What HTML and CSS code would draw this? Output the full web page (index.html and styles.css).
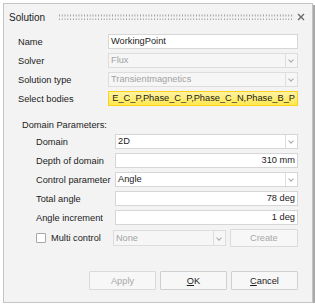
FILE: index.html
```html
<!DOCTYPE html>
<html lang="en">
<head>
    <meta charset="UTF-8">
    <title>Solution</title>
    <link rel="stylesheet" href="styles.css">
</head>
<body>
    <div class="window">
        <div class="titlebar">
            <span class="title">Solution</span>
            <span class="grip"></span>
            <svg class="close" width="8" height="8" viewBox="0 0 8 8">
                <path d="M1 1 L7 7 M7 1 L1 7" stroke="#6a6a6a" stroke-width="1.4" fill="none"/>
            </svg>
        </div>

        <div class="form">
            <div class="grid top">
                <label>Name</label>
                <div class="field">WorkingPoint</div>

                <label>Solver</label>
                <div class="field combo disabled"><span class="val">Flux</span><span class="arrow"></span></div>

                <label>Solution type</label>
                <div class="field combo disabled"><span class="val">Transientmagnetics</span><span class="arrow"></span></div>

                <label>Select bodies</label>
                <div class="field picked">E_C_P,Phase_C_P,Phase_C_N,Phase_B_P</div>
            </div>

            <div class="section">Domain Parameters:</div>

            <div class="grid domain">
                <label>Domain</label>
                <div class="field combo"><span class="val">2D</span><span class="arrow"></span></div>

                <label>Depth of domain</label>
                <div class="field num">310 mm</div>

                <label>Control parameter</label>
                <div class="field combo"><span class="val">Angle</span><span class="arrow"></span></div>

                <label>Total angle</label>
                <div class="field num">78 deg</div>

                <label>Angle increment</label>
                <div class="field num">1 deg</div>
            </div>

            <div class="multi">
                <span class="check"></span>
                <label>Multi control</label>
                <div class="field combo disabled none"><span class="val">None</span><span class="arrow"></span></div>
                <button class="btn create" disabled>Create</button>
            </div>

            <div class="actions">
                <button class="btn" disabled>Apply</button>
                <button class="btn"><u>O</u>K</button>
                <button class="btn"><u>C</u>ancel</button>
            </div>
        </div>
    </div>
</body>
</html>
```

FILE: styles.css
```css
body {
    margin: 0;
    background: #ffffff;
    font-family: "Liberation Sans", Arial, sans-serif;
    font-size: 9.25px;
    color: #1c1c1c;
}
.window {
    margin: 3px 0 0 3px;
    width: 308px;
    height: 298px;
    background: #f3f3f3;
    border: 1px solid #c4c4c4;
    box-shadow: 2px 2px 0 #a9a9a9;
}
.titlebar {
    height: 26px;
    display: flex;
    align-items: center;
    padding: 0 7px 0 5px;
}
.title {
    font-size: 10px;
    color: #222;
}
.grip {
    flex: 1;
    height: 6px;
    margin: 0 3px 0 13px;
    background-image: radial-gradient(circle, #9c9c9c 0.7px, transparent 0.9px);
    background-size: 2.8px 4px;
    background-position: 0 -0.5px;
}
.close {
    display: block;
}
.form {
    padding: 4px 0 0 14px;
}
.grid {
    display: grid;
    row-gap: 4px;
    grid-auto-rows: 15px;
    align-items: center;
}
.top {
    grid-template-columns: 90px 190px;
}
.domain {
    grid-template-columns: 79px 183px;
    padding-left: 18px;
}
label {
    white-space: nowrap;
}
.field {
    height: 15px;
    box-sizing: border-box;
    background: #ffffff;
    border: 1px solid #d6d6d6;
    padding: 0 2px;
    line-height: 13px;
    white-space: nowrap;
    overflow: hidden;
}
.combo {
    display: flex;
    padding-right: 0;
}
.combo .val {
    flex: 1;
}
.arrow {
    width: 11px;
    border-left: 1px solid #dedede;
    position: relative;
}
.arrow::after {
    content: "";
    position: absolute;
    left: 3px;
    top: 4px;
    width: 3px;
    height: 3px;
    border-right: 1px solid #a8a8a8;
    border-bottom: 1px solid #a8a8a8;
    transform: rotate(45deg);
}
.disabled {
    background: #f6f6f6;
    border-color: #dddddd;
    color: #a3a3a3;
}
.picked {
    background: linear-gradient(#fff3a2, #ffe84e);
    border-color: #ffd21a;
    text-align: right;
}
.num {
    text-align: right;
}
.section {
    line-height: 12px;
    margin: 13px 0 3px 4px;
}
.multi {
    display: flex;
    align-items: center;
    height: 18px;
    margin-top: 4px;
    padding-left: 18px;
}
.check {
    width: 10px;
    height: 10px;
    box-sizing: border-box;
    background: #ffffff;
    border: 1px solid #a6a6a6;
    border-radius: 1px;
    margin-right: 5px;
}
.none {
    width: 113px;
    height: 16px;
    margin-left: 12px;
    line-height: 14px;
}
.none .arrow::after {
    top: 4.5px;
}
.btn {
    font-family: inherit;
    font-size: 9.25px;
    color: #1c1c1c;
    background: #f7f7f7;
    border: 1px solid #d0d0d0;
    border-radius: 1px;
    padding: 0;
    width: 67px;
    height: 19px;
}
.btn:disabled {
    color: #a8a8a8;
    border-color: #dadada;
}
.create {
    width: 68px;
    height: 18px;
    margin-left: 4px;
}
.actions {
    display: flex;
    justify-content: flex-end;
    gap: 4px;
    width: 280px;
    margin-top: 24px;
}
```
